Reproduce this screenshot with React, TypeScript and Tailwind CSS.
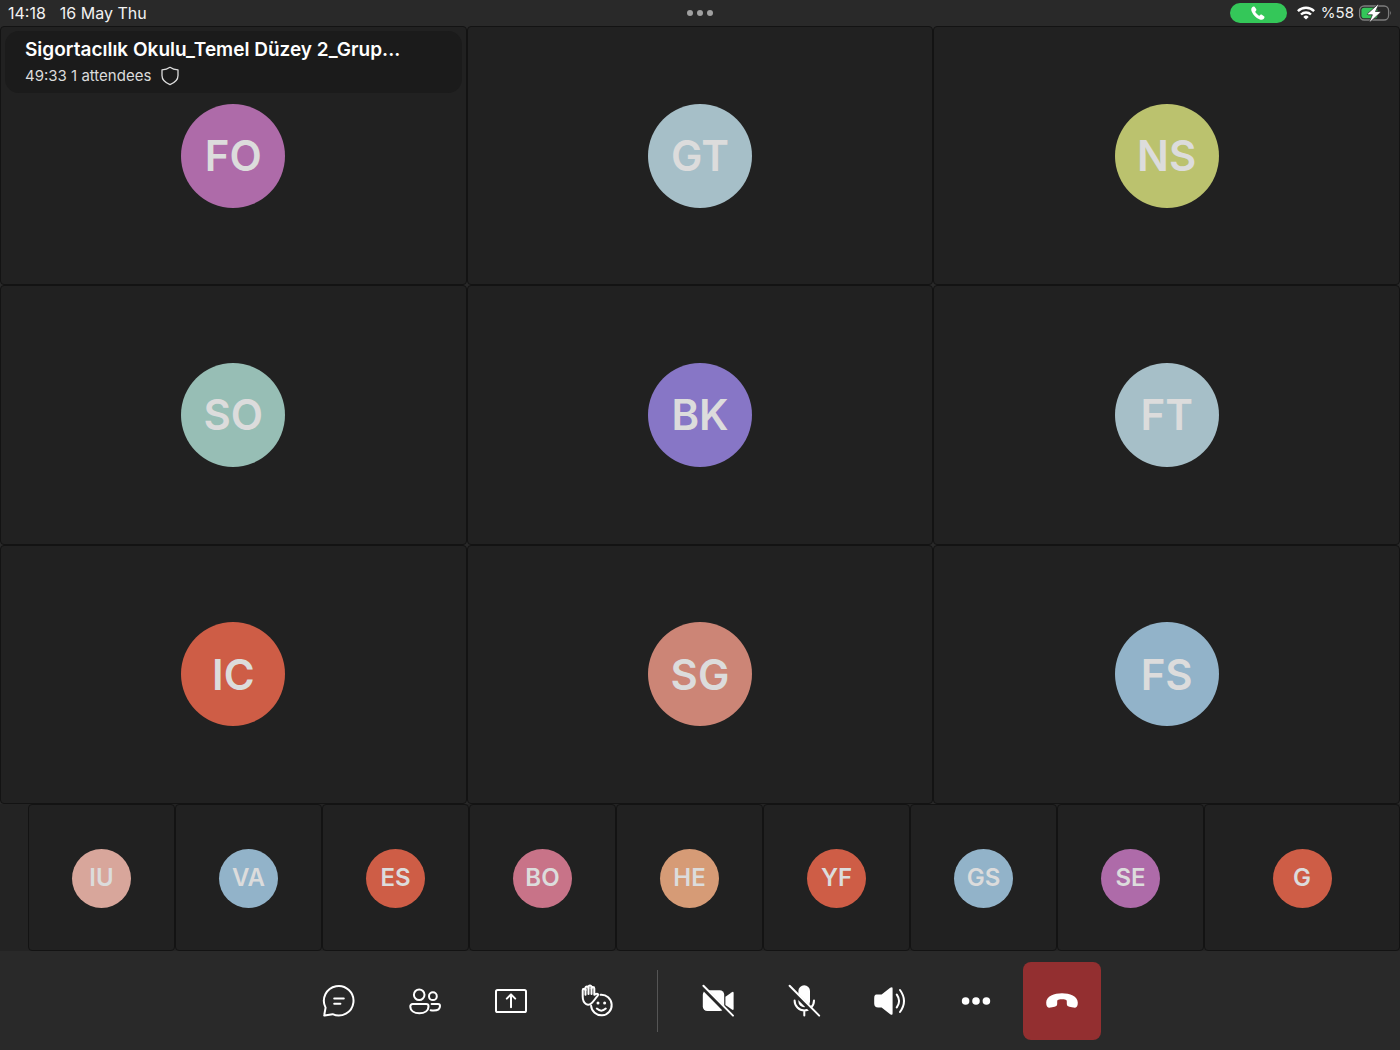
import type { ReactNode } from "react";

type Person = { initials: string; color: string };

const mainTiles: Person[] = [
  { initials: "FO", color: "bg-[#ae6ba9]" },
  { initials: "GT", color: "bg-[#a6bfc8]" },
  { initials: "NS", color: "bg-[#bbc26e]" },
  { initials: "SO", color: "bg-[#97beb5]" },
  { initials: "BK", color: "bg-[#8776c6]" },
  { initials: "FT", color: "bg-[#a6bfc8]" },
  { initials: "IC", color: "bg-[#ce5d46]" },
  { initials: "SG", color: "bg-[#cc8576]" },
  { initials: "FS", color: "bg-[#92b3c9]" },
];

const stripTiles: Person[] = [
  { initials: "IU", color: "bg-[#d8a69b]" },
  { initials: "VA", color: "bg-[#92b3c9]" },
  { initials: "ES", color: "bg-[#ce5d46]" },
  { initials: "BO", color: "bg-[#c87388]" },
  { initials: "HE", color: "bg-[#d69b76]" },
  { initials: "YF", color: "bg-[#ce5d46]" },
  { initials: "GS", color: "bg-[#92b3c9]" },
  { initials: "SE", color: "bg-[#ae6ba9]" },
  { initials: "G", color: "bg-[#ce5d46]" },
];

function Icon({ children }: { children: ReactNode }) {
  return (
    <svg
      viewBox="0 0 36 36"
      className="h-9 w-9"
      fill="none"
      stroke="currentColor"
      strokeWidth="2"
      strokeLinecap="round"
      strokeLinejoin="round"
      aria-hidden="true"
    >
      {children}
    </svg>
  );
}

function ChatIcon() {
  return (
    <Icon>
      <path d="M4.6 24.6A14.8 14.8 0 1 1 11.6 31.2L3.6 32.6Q3 32.6 3.3 31.8Z" />
      <path d="M13.2 15.4h9.6M13.2 20.8h6.2" />
    </Icon>
  );
}

function PeopleIcon() {
  return (
    <Icon>
      <circle cx="12.2" cy="11.8" r="5.3" />
      <circle cx="25.9" cy="13.2" r="3.9" />
      <path d="M5.6 21h13.6a2.3 2.3 0 0 1 2.3 2.3c0 4.6-4 7-9.1 7s-9.1-2.4-9.1-7A2.3 2.3 0 0 1 5.6 21Z" />
      <path d="M24.6 21h6.4a2 2 0 0 1 2 2c0 3.2-2.8 4.6-6.4 4.6-1 0-2-.1-3-.3" />
    </Icon>
  );
}

function ShareIcon() {
  return (
    <Icon>
      <rect x="3" y="7" width="30" height="22" rx="1.6" />
      <path d="M18 24.2V11.6M13.8 15.6 18 11.4l4.2 4.2" />
    </Icon>
  );
}

function ReactIcon() {
  return (
    <Icon>
      <path d="M21.6 11.8A10.3 10.3 0 1 1 12.1 22.8" />
      <path d="M17.8 25.6q4.5 4.2 9 0" />
      <circle cx="19" cy="20" r="1.5" fill="currentColor" stroke="none" />
      <circle cx="25.6" cy="20" r="1.5" fill="currentColor" stroke="none" />
      <path d="M7.2 21.2C4.6 19.6 3.7 17 3.7 13.6V7.2a1.4 1.4 0 0 1 2.8 0V5a1.5 1.5 0 0 1 3 0V4a1.5 1.5 0 0 1 3 0v1.4a1.4 1.4 0 0 1 2.8 0v6.4l2-.9c1.4-.5 2.4.8 1.5 1.8-2.6 2.8-4 5.6-6.3 7.5-1.6 1.4-3.6 1.8-5.3 1Z" />
      <path d="M6.5 6.5v5.3M9.5 5v6M12.5 5v6" />
    </Icon>
  );
}

function CameraOffIcon() {
  return (
    <Icon>
      <rect x="2.8" y="7.2" width="21.4" height="20.8" rx="4.5" fill="currentColor" stroke="none" />
      <path d="M25.4 13.8 31.9 9.2q1.7-1 1.7.9v15.6q0 2-1.7.9l-6.5-4.6Z" fill="currentColor" stroke="none" />
      <path d="M2.6 4.2 31.4 33.4" stroke="#292929" strokeWidth="4.4" />
      <path d="M3.4 2.8 33 32.6" />
    </Icon>
  );
}

function MicOffIcon() {
  return (
    <Icon>
      <rect x="12.4" y="2.2" width="11.6" height="22" rx="5.8" fill="currentColor" stroke="none" />
      <path d="M8.6 17.4a9.7 10 0 0 0 19.4 0M18.3 27.6v5" />
      <path d="M2.6 4.2 31.6 33.4" stroke="#292929" strokeWidth="4.4" />
      <path d="M3.6 2.8 33.2 32.6" />
    </Icon>
  );
}

function SpeakerIcon() {
  return (
    <Icon>
      <path
        d="M4.4 11.6h5.2l8.6-6.8q2.4-1.6 2.4.8v24.8q0 2.4-2.4.8l-8.6-6.8H6.2Q2.2 24.4 2.2 20.4v-5.2q0-3.6 2.2-3.6Z"
        fill="currentColor"
        stroke="none"
      />
      <path d="M24.8 11.6q4.6 6.4 0 12.8M28 7q8 11 0 22" />
    </Icon>
  );
}

function MoreIcon() {
  return (
    <Icon>
      <g fill="currentColor" stroke="none">
        <circle cx="7.6" cy="18" r="3.8" />
        <circle cx="18" cy="18" r="3.8" />
        <circle cx="28.4" cy="18" r="3.8" />
      </g>
    </Icon>
  );
}

function HangUpIcon() {
  return (
    <Icon>
      <path
        d="M18 10.2c7.6 0 15.8 2.6 15.8 9.6 0 4-1.6 5.4-4.6 4.8l-3.8-.8c-2-.4-2.6-1.4-2.6-3.2v-2.2c0-1-.4-1.4-1.2-1.6-2.4-.6-4.8-.6-7.2 0-.8.2-1.2.6-1.2 1.6v2.2c0 1.8-.6 2.8-2.6 3.2l-3.8.8c-3 .6-4.6-.8-4.6-4.8 0-7 8.2-9.6 15.8-9.6Z"
        fill="currentColor"
        stroke="none"
      />
    </Icon>
  );
}

function StatusBar() {
  return (
    <header className="grid h-[26px] grid-cols-3 items-center px-2 leading-5">
      <div className="flex gap-3.5 text-base leading-5">
        <span>14:18</span>
        <span>16 May Thu</span>
      </div>
      <div className="flex justify-center gap-1">
        <span className="h-1.5 w-1.5 rounded-full bg-[#a0a0a0]" />
        <span className="h-1.5 w-1.5 rounded-full bg-[#a0a0a0]" />
        <span className="h-1.5 w-1.5 rounded-full bg-[#a0a0a0]" />
      </div>
      <div className="flex items-center justify-end text-[15px]">
        <span className="mr-2.5 flex h-5 w-[57px] items-center justify-center rounded-full bg-[#34c759]">
          <svg viewBox="0 0 14 14" className="h-3.5 w-3.5" fill="white" aria-hidden="true">
            <path d="M1 1.4C1.8.5 3 .1 3.7 1l1.500 2.100c.4.6.3 1.200-.2 1.700l-.6.6c-.3.3-.2.6 0 .9.9 1.300 2 2.400 3.300 3.300.3.2.6.3.9 0l.6-.6c.5-.5 1.100-.6 1.700-.2L13 10.300c.9.7.5 1.900-.4 2.700-1 .9-2.500 1-4.300.2C4.900 11.600 2.400 9.100.8 5.700 0 3.900.1 2.400 1 1.400Z" />
          </svg>
        </span>
        <svg viewBox="0 0 18 14" className="mr-1.5 h-3.5 w-[18px]" fill="none" stroke="white" strokeWidth="2.4" aria-hidden="true">
          <path d="M.9 5.1a11.5 11.5 0 0 1 16.2 0M4 8.5a7.2 7.2 0 0 1 10 0" />
          <path d="M9 13.6 6.3 10.9a3.9 3.9 0 0 1 5.4 0Z" fill="white" stroke="none" />
        </svg>
        <span className="mr-1">%58</span>
        <svg viewBox="0 0 34 18" className="h-[18px] w-[34px]" aria-hidden="true">
          <rect x="1.6" y="2" width="29" height="14" rx="4.5" fill="none" stroke="#7d7d7d" strokeWidth="1.3" />
          <rect x="3.4" y="3.8" width="16" height="10.4" rx="2.8" fill="#34c759" />
          <path d="M32 6.8q1.800 2.200 0 4.400Z" fill="#7d7d7d" />
          <path
            d="M19.400.8 9.600 9.600q-.8 1 .5 1.200h4.300l-2.700 6.300q-.1 1.300 1 .5l9.500-8.900q.8-1-.5-1.200h-4.200l2.900-6.200q.1-1.300-1-.5Z"
            fill="white"
            stroke="#292929"
            strokeWidth=".8"
          />
        </svg>
      </div>
    </header>
  );
}

function MeetingInfo() {
  return (
    <div className="absolute left-1 right-1 top-1 rounded-[14px] bg-[#1b1b1b] px-5 pb-[7px] pt-[7px]">
      <h1 className="truncate text-[19px] font-semibold leading-6 text-white">
        Sigortacılık Okulu_Temel Düzey 2_Grup...
      </h1>
      <p className="mt-1 flex items-center gap-2.5 text-[15px] leading-5 text-[#dcdcdc]">
        49:33 1 attendees
        <svg viewBox="0 0 18 20" className="h-5 w-[18px]" fill="none" stroke="currentColor" strokeWidth="1.3" strokeLinejoin="round" aria-hidden="true">
          <path d="M9 1.3C11.4 3 14 3.7 17 3.8v5.800c0 4.200-3.200 7.200-8 9-4.800-1.800-8-4.800-8-9V3.800C4 3.700 6.600 3 9 1.300Z" />
        </svg>
      </p>
    </div>
  );
}

function ControlButton({ label, children }: { label: string; children: ReactNode }) {
  return (
    <button type="button" aria-label={label} className="flex h-[78px] w-[78px] items-center justify-center rounded-lg">
      {children}
    </button>
  );
}

export default function App() {
  return (
    <div className="flex min-h-screen flex-col bg-[#292929] font-['Inter',sans-serif] text-[#f2f2f2]">
      <StatusBar />

      <main className="flex flex-1 flex-col">
        <section className="grid flex-1 grid-cols-3 grid-rows-3" aria-label="Participants">
          {mainTiles.map((person, index) => (
            <div
              key={person.initials}
              className="relative flex items-center justify-center rounded border border-[#131313] bg-[#212121]"
            >
              <div
                className={`flex h-[104px] w-[104px] items-center justify-center rounded-full text-[42px] font-semibold text-[#dcdcdc] ${person.color}`}
              >
                {person.initials}
              </div>
              {index === 0 && <MeetingInfo />}
            </div>
          ))}
        </section>

        <section
          className="grid h-[147px] grid-cols-[28px_repeat(8,147fr)_196fr] bg-[#232323]"
          aria-label="More participants"
        >
          <div />
          {stripTiles.map((person) => (
            <div
              key={person.initials}
              className="flex items-center justify-center rounded border border-[#131313] bg-[#212121] pt-px"
            >
              <div
                className={`flex h-[59px] w-[59px] items-center justify-center rounded-full text-2xl font-semibold text-[#dcdcdc] ${person.color}`}
              >
                {person.initials}
              </div>
            </div>
          ))}
        </section>
      </main>

      <footer className="flex h-[99px] items-center justify-center gap-2 text-white">
        <ControlButton label="Chat">
          <ChatIcon />
        </ControlButton>
        <ControlButton label="People">
          <PeopleIcon />
        </ControlButton>
        <ControlButton label="Share">
          <ShareIcon />
        </ControlButton>
        <ControlButton label="Reactions">
          <ReactIcon />
        </ControlButton>
        <div className="mx-[13px] h-[62px] w-px bg-[#555555]" />
        <ControlButton label="Turn camera on">
          <CameraOffIcon />
        </ControlButton>
        <ControlButton label="Unmute">
          <MicOffIcon />
        </ControlButton>
        <ControlButton label="Audio">
          <SpeakerIcon />
        </ControlButton>
        <ControlButton label="More">
          <MoreIcon />
        </ControlButton>
        <button
          type="button"
          aria-label="Leave"
          className="flex h-[78px] w-[78px] items-center justify-center rounded-lg bg-[#932f30]"
        >
          <HangUpIcon />
        </button>
      </footer>
    </div>
  );
}
